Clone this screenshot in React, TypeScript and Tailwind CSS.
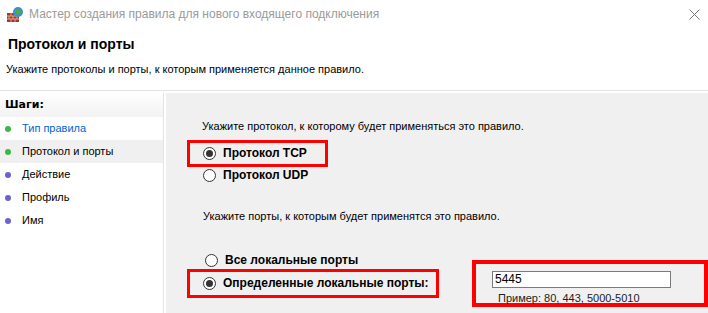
import React from "react";

const font = { fontFamily: '"Liberation Sans", Arial, sans-serif' };

function Radio({ checked }: { checked?: boolean }) {
  return (
    <span className="flex h-[13px] w-[13px] shrink-0 items-center justify-center rounded-full border border-[#333] bg-white">
      {checked && <span className="h-[7px] w-[7px] rounded-full bg-[#333]" />}
    </span>
  );
}

function FirewallIcon() {
  return (
    <svg width="18" height="17" viewBox="0 0 18 17">
      <rect x="1" y="7" width="12" height="9" fill="#a0392b" />
      <path d="M1 10h12M1 13h12M5 7v3M9 7v3M3 10v3M7 10v3M11 10v3M5 13v3M9 13v3" stroke="#e8c0a0" strokeWidth="0.8" />
      <circle cx="12" cy="6" r="5" fill="#3a8fd8" />
      <path d="M9 4c2-1 3 1 4 0s2 1 3 2c-1 2-3 1-4 3-1-1-3-1-3-3z" fill="#4caf3a" />
    </svg>
  );
}

const steps = [
  { name: "Тип правила", dot: "bg-[#3cb64a]", cls: "text-[#0066cc]" },
  { name: "Протокол и порты", dot: "bg-[#3cb64a]", cls: "text-black bg-[#f0f0f0]" },
  { name: "Действие", dot: "bg-[#6b63c9]", cls: "text-black" },
  { name: "Профиль", dot: "bg-[#6b63c9]", cls: "text-black" },
  { name: "Имя", dot: "bg-[#6b63c9]", cls: "text-black" },
];

export default function App() {
  return (
    <div className="flex h-[313px] w-[708px] flex-col overflow-hidden bg-white text-[11px] leading-[15px] text-black" style={font}>
      {/* title bar */}
      <div className="flex h-[28px] items-center pl-[6px] pr-[8px]">
        <FirewallIcon />
        <span className="ml-[5px] text-[12px] text-[#9a9a9a]">Мастер создания правила для нового входящего подключения</span>
        <svg className="ml-auto" width="11" height="11" viewBox="0 0 11 11">
          <path d="M0.5 0.5l10 10M10.5 0.5l-10 10" stroke="#777" strokeWidth="1" />
        </svg>
      </div>

      {/* header */}
      <div className="border-b border-[#e3e3e3] pb-[13px]">
        <div className="pl-[8px] pt-[8px] text-[14px] font-bold leading-[17px]">Протокол и порты</div>
        <div className="pl-[6px] pt-[9px]">Укажите протоколы и порты, к которым применяется данное правило.</div>
      </div>

      <div className="flex min-h-0 flex-1 pt-[2px]">
        {/* steps */}
        <div className="w-[164px] shrink-0 border-r border-[#e3e3e3]">
          <div className="flex h-[24px] items-center bg-gradient-to-b from-white to-[#f2f2f2] pb-[2px] pl-[5px] font-bold" style={{ fontFamily: '"DejaVu Sans", sans-serif', fontSize: 11 }}>
            Шаги:
          </div>
          <div className="flex flex-col">
            {steps.map((s) => (
              <div key={s.name} className={`flex h-[23px] items-center gap-[11px] pl-[5px] ${s.cls}`}>
                <span className={`h-[6px] w-[6px] rounded-full ${s.dot}`} />
                <span>{s.name}</span>
              </div>
            ))}
          </div>
        </div>

        {/* right panel */}
        <div className="ml-[2px] flex-1 bg-[#f0f0f0] pl-[21px] pt-[26px]">
          <div className="pl-[15px]">Укажите протокол, к которому будет применяться это правило.</div>

          <div className="mt-[6px] flex w-[141px] flex-col text-[12px] font-bold">
            <div className="flex h-[27px] items-center gap-[7px] border-[3px] border-[#ff0000] pl-[13px]">
              <Radio checked />
              <span>Протокол TCP</span>
            </div>
            <div className="flex h-[16px] items-center gap-[7px] pl-[16px]">
              <Radio />
              <span>Протокол UDP</span>
            </div>
          </div>

          <div className="mt-[26px] pl-[16px]">Укажите порты, к которым будет применятся это правило.</div>

          <div className="mt-[28px] flex">
            <div className="flex flex-col text-[12px] font-bold">
              <div className="flex h-[17px] items-center gap-[7px] pl-[18px]">
                <Radio />
                <span>Все локальные порты</span>
              </div>
              <div className="flex h-[29px] w-[252px] items-center gap-[7px] border-[3px] border-[#ff0000] pl-[13px]">
                <Radio checked />
                <span>Определенные локальные порты:</span>
              </div>
            </div>
            <div className="ml-[33px] mt-[8px] flex h-[47px] flex-1 flex-col border-[4px] border-[#ff0000] pl-[16px] pt-[7px]">
              <div className="flex h-[20px] w-[179px] items-center border border-[#7a7a7a] bg-white pl-[2px] text-[12px]">5445</div>
              <div className="pl-[6px] pt-[3px] text-[#222]">Пример: 80, 443, 5000-5010</div>
            </div>
          </div>
        </div>
      </div>
    </div>
  );
}
